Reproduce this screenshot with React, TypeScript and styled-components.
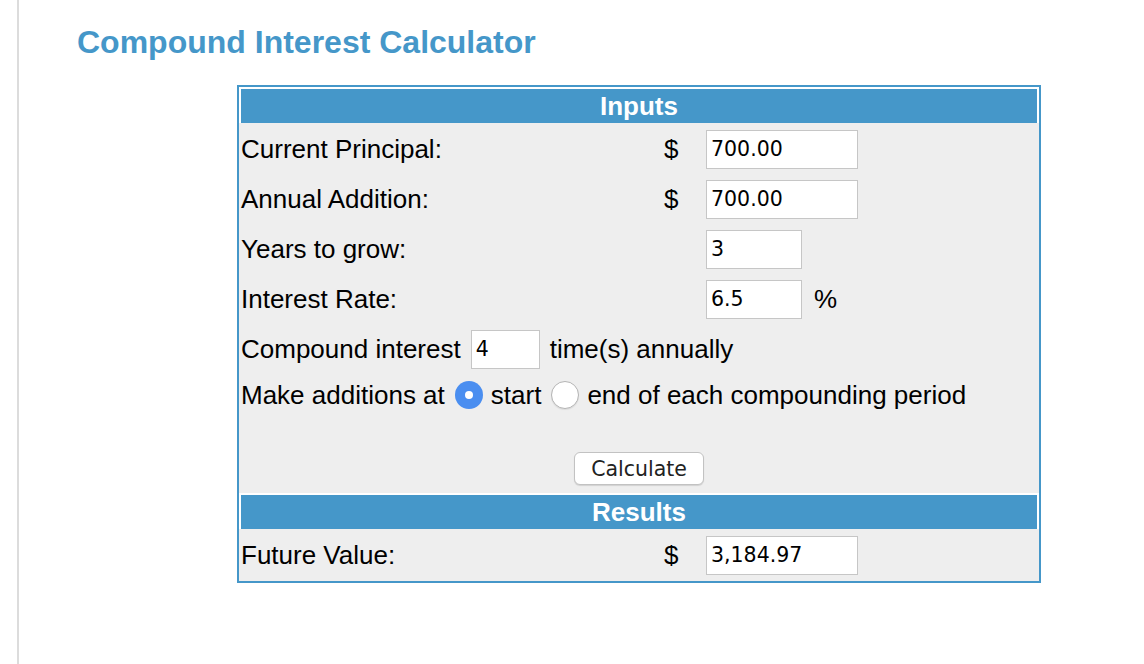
import React, { useState } from 'react';
import styled, { createGlobalStyle } from 'styled-components';

const GlobalStyle = createGlobalStyle`
  html, body {
    margin: 0;
    padding: 0;
    background: #fff;
  }
  body {
    font-family: "Liberation Sans", Arial, Helvetica, sans-serif;
    color: #000;
  }
`;

const Page = styled.div`
  margin-left: 17px;
  border-left: 2px solid #dcdcdc;
  min-height: 664px;
  padding: 22px 0 0 58px;
  box-sizing: border-box;
`;

const Title = styled.h1`
  margin: 0 0 23px;
  font-size: 32px;
  line-height: 40px;
  font-weight: bold;
  color: #4597c9;
`;

const Panel = styled.div`
  margin-left: 160px;
  width: 804px;
  box-sizing: border-box;
  border: 2px solid #4597c9;
  background: #eeeeee;
  padding: 2px;
  display: flex;
  flex-direction: column;
  gap: 2px;
`;

const SectionHeader = styled.div`
  height: 34px;
  line-height: 34px;
  margin: -2px -2px 0;
  border: 2px solid #fff;
  border-bottom: none;
  background: #4597c9;
  color: #fff;
  font-size: 26px;
  font-weight: bold;
  text-align: center;
`;

const FieldRow = styled.div`
  height: 48px;
  display: grid;
  grid-template-columns: 423px 42px auto 1fr;
  align-items: center;
  font-size: 26px;
`;

const Label = styled.span`
  white-space: nowrap;
`;

const Unit = styled.span`
  white-space: nowrap;
`;

const Suffix = styled.span`
  margin-left: 12px;
`;

const TextInput = styled.input<{ $w: number }>`
  width: ${(p) => p.$w}px;
  height: 39px;
  box-sizing: border-box;
  border: 1px solid #c6c6c6;
  background: #fff;
  padding: 0 4px;
  font-family: "DejaVu Sans", sans-serif;
  font-size: 20.5px;
  color: #000;
  outline: none;
  margin: 0;
`;

const InlineRow = styled.div<{ $h: number }>`
  height: ${(p) => p.$h}px;
  display: flex;
  align-items: center;
  font-size: 26px;
  white-space: nowrap;
`;

const Gap = styled.span<{ $w: number }>`
  display: inline-block;
  width: ${(p) => p.$w}px;
`;

const Radio = styled.input`
  appearance: none;
  -webkit-appearance: none;
  margin: 0;
  width: 28px;
  height: 28px;
  border-radius: 50%;
  box-sizing: border-box;
  border: 1px solid #b4b4b4;
  background: #fff;
  box-shadow: 0 1px 1px rgba(0, 0, 0, 0.08);
  position: relative;
  cursor: pointer;

  &:checked {
    border: none;
    background: #4a8ef0;
    box-shadow: none;
  }

  &:checked::after {
    content: '';
    position: absolute;
    left: 10px;
    top: 10px;
    width: 8px;
    height: 8px;
    border-radius: 50%;
    background: #fff;
  }
`;

const ButtonRow = styled.div`
  height: 76px;
  display: flex;
  justify-content: center;
  align-items: flex-end;
  padding-bottom: 8px;
  box-sizing: border-box;
`;

const CalcButton = styled.button`
  height: 33px;
  padding: 0 16px;
  border: 1px solid #c2c2c2;
  border-radius: 6px;
  background: #fff;
  box-shadow: 0 1px 1px rgba(0, 0, 0, 0.12);
  font-family: "DejaVu Sans", sans-serif;
  font-size: 20.5px;
  color: #222;
  cursor: pointer;
`;

const App: React.FC = () => {
  const [principal, setPrincipal] = useState('700.00');
  const [addition, setAddition] = useState('700.00');
  const [years, setYears] = useState('3');
  const [rate, setRate] = useState('6.5');
  const [times, setTimes] = useState('4');
  const [timing, setTiming] = useState<'start' | 'end'>('start');
  const [result, setResult] = useState('3,184.97');

  const calculate = () => {
    const p = parseFloat(principal.replace(/,/g, '')) || 0;
    const a = parseFloat(addition.replace(/,/g, '')) || 0;
    const y = parseFloat(years) || 0;
    const r = (parseFloat(rate) || 0) / 100;
    const n = parseInt(times, 10) || 1;
    const periods = Math.round(y * n);
    const i = r / n;
    const perAdd = a / n;
    let value = p;
    for (let k = 0; k < periods; k++) {
      if (timing === 'start') value += perAdd;
      value *= 1 + i;
      if (timing === 'end') value += perAdd;
    }
    setResult(
      value.toLocaleString('en-US', { minimumFractionDigits: 2, maximumFractionDigits: 2 })
    );
  };

  return (
    <>
      <GlobalStyle />
      <Page>
        <Title>Compound Interest Calculator</Title>
        <Panel>
          <SectionHeader>Inputs</SectionHeader>
          <FieldRow>
            <Label>Current Principal:</Label>
            <Unit>$</Unit>
            <TextInput $w={152} value={principal} onChange={(e) => setPrincipal(e.target.value)} />
          </FieldRow>
          <FieldRow>
            <Label>Annual Addition:</Label>
            <Unit>$</Unit>
            <TextInput $w={152} value={addition} onChange={(e) => setAddition(e.target.value)} />
          </FieldRow>
          <FieldRow>
            <Label>Years to grow:</Label>
            <Unit />
            <TextInput $w={96} value={years} onChange={(e) => setYears(e.target.value)} />
          </FieldRow>
          <FieldRow>
            <Label>Interest Rate:</Label>
            <Unit />
            <TextInput $w={96} value={rate} onChange={(e) => setRate(e.target.value)} />
            <Suffix>%</Suffix>
          </FieldRow>
          <InlineRow $h={48}>
            Compound interest
            <Gap $w={10} />
            <TextInput $w={69} value={times} onChange={(e) => setTimes(e.target.value)} />
            <Gap $w={10} />
            time(s) annually
          </InlineRow>
          <InlineRow $h={40}>
            Make additions at
            <Gap $w={10} />
            <Radio
              type="radio"
              name="timing"
              checked={timing === 'start'}
              onChange={() => setTiming('start')}
            />
            <Gap $w={8} />
            start
            <Gap $w={10} />
            <Radio
              type="radio"
              name="timing"
              checked={timing === 'end'}
              onChange={() => setTiming('end')}
            />
            <Gap $w={8} />
            end of each compounding period
          </InlineRow>
          <ButtonRow>
            <CalcButton onClick={calculate}>Calculate</CalcButton>
          </ButtonRow>
          <SectionHeader>Results</SectionHeader>
          <FieldRow>
            <Label>Future Value:</Label>
            <Unit>$</Unit>
            <TextInput $w={152} value={result} readOnly />
          </FieldRow>
        </Panel>
      </Page>
    </>
  );
};

export default App;
